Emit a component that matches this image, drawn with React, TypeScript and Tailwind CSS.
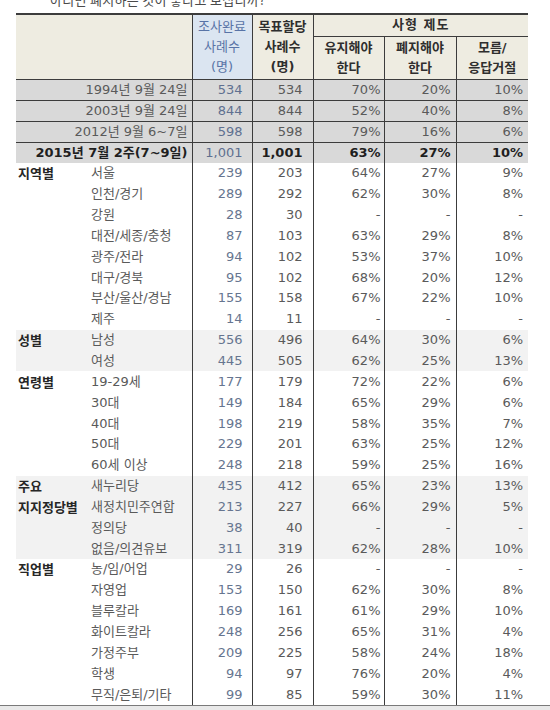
import React from "react";

type Row = [string, string, string, string, string, string];

const groups: { label: string[]; gray: boolean; rows: Row[] }[] = [
  {
    label: ["지역별"],
    gray: false,
    rows: [
      ["서울", "239", "203", "64%", "27%", "9%"],
      ["인천/경기", "289", "292", "62%", "30%", "8%"],
      ["강원", "28", "30", "-", "-", "-"],
      ["대전/세종/충청", "87", "103", "63%", "29%", "8%"],
      ["광주/전라", "94", "102", "53%", "37%", "10%"],
      ["대구/경북", "95", "102", "68%", "20%", "12%"],
      ["부산/울산/경남", "155", "158", "67%", "22%", "10%"],
      ["제주", "14", "11", "-", "-", "-"],
    ],
  },
  {
    label: ["성별"],
    gray: true,
    rows: [
      ["남성", "556", "496", "64%", "30%", "6%"],
      ["여성", "445", "505", "62%", "25%", "13%"],
    ],
  },
  {
    label: ["연령별"],
    gray: false,
    rows: [
      ["19-29세", "177", "179", "72%", "22%", "6%"],
      ["30대", "149", "184", "65%", "29%", "6%"],
      ["40대", "198", "219", "58%", "35%", "7%"],
      ["50대", "229", "201", "63%", "25%", "12%"],
      ["60세 이상", "248", "218", "59%", "25%", "16%"],
    ],
  },
  {
    label: ["주요", "지지정당별"],
    gray: true,
    rows: [
      ["새누리당", "435", "412", "65%", "23%", "13%"],
      ["새정치민주연합", "213", "227", "66%", "29%", "5%"],
      ["정의당", "38", "40", "-", "-", "-"],
      ["없음/의견유보", "311", "319", "62%", "28%", "10%"],
    ],
  },
  {
    label: ["직업별"],
    gray: false,
    rows: [
      ["농/임/어업", "29", "26", "-", "-", "-"],
      ["자영업", "153", "150", "62%", "30%", "8%"],
      ["블루칼라", "169", "161", "61%", "29%", "10%"],
      ["화이트칼라", "248", "256", "65%", "31%", "4%"],
      ["가정주부", "209", "225", "58%", "24%", "18%"],
      ["학생", "94", "97", "76%", "20%", "4%"],
      ["무직/은퇴/기타", "99", "85", "59%", "30%", "11%"],
    ],
  },
];

const years: { label: string; v: string[]; bold: boolean }[] = [
  { label: "1994년 9월 24일", v: ["534", "534", "70%", "20%", "10%"], bold: false },
  { label: "2003년 9월 24일", v: ["844", "844", "52%", "40%", "8%"], bold: false },
  { label: "2012년 9월 6~7일", v: ["598", "598", "79%", "16%", "6%"], bold: false },
  { label: "2015년 7월 2주(7~9일)", v: ["1,001", "1,001", "63%", "27%", "10%"], bold: true },
];

const vline = "border-r border-r-[#3c3c3c]";

export default function App() {
  return (
    <div className="w-[550px] h-[710px] overflow-hidden bg-white font-['DejaVu_Sans','Noto_Sans_CJK_KR',sans-serif] text-[13px] text-[#5a5a5a]">
      <div className="h-[13px] overflow-hidden pl-[50px]">
        <div className="-mt-[8px] leading-[16px] text-[13px] text-[#4a4a4a] font-['Noto_Sans_CJK_KR',sans-serif] tracking-[0.3px]">
          아니면 폐지하는 것이 좋다고 보십니까?
        </div>
      </div>
      <table className="ml-[16px] w-[512px] table-fixed border-collapse">
        <colgroup>
          <col className="w-[74px]" />
          <col className="w-[102px]" />
          <col className="w-[60px]" />
          <col className="w-[61px]" />
          <col className="w-[71px]" />
          <col className="w-[72px]" />
          <col className="w-[72px]" />
        </colgroup>
        <thead>
          <tr className="h-[22px]">
            <th
              colSpan={2}
              rowSpan={2}
              className={`bg-[#eeece1] border-t-2 border-t-[#3c3c3c] border-b border-b-[#3c3c3c] ${vline} p-0`}
            ></th>
            <th
              rowSpan={2}
              className={`bg-[#dbe5f1] border-t-2 border-t-[#3c3c3c] border-b border-b-[#3c3c3c] ${vline} p-0 pt-[2px] align-top font-normal text-[#5873a6] leading-[20px]`}
            >
              조사완료
              <br />
              사례수
              <br />
              (명)
            </th>
            <th
              rowSpan={2}
              className={`bg-[#eeece1] border-t-2 border-t-[#3c3c3c] border-b border-b-[#3c3c3c] ${vline} p-0 pt-[2px] align-top font-bold text-[#2e2e2e] leading-[20px]`}
            >
              목표할당
              <br />
              사례수
              <br />
              (명)
            </th>
            <th
              colSpan={3}
              className="bg-[#eeece1] border-t-2 border-t-[#3c3c3c] border-b border-b-[#3c3c3c] p-0 font-bold text-[#2e2e2e] leading-[20px] tracking-[1px]"
            >
              사형 제도
            </th>
          </tr>
          <tr className="h-[43px]">
            <th className={`bg-[#eeece1] border-b border-b-[#3c3c3c] ${vline} p-0 font-bold text-[#2e2e2e] leading-[20px]`}>
              유지해야
              <br />
              한다
            </th>
            <th className={`bg-[#eeece1] border-b border-b-[#3c3c3c] ${vline} p-0 font-bold text-[#2e2e2e] leading-[20px]`}>
              폐지해야
              <br />
              한다
            </th>
            <th className="bg-[#eeece1] border-b border-b-[#3c3c3c] p-0 font-bold text-[#2e2e2e] leading-[20px]">
              모름/
              <br />
              응답거절
            </th>
          </tr>
        </thead>
        <tbody>
          {years.map((y, i) => {
            const last = i === years.length - 1;
            const bb = last ? "" : "border-b border-b-[#3c3c3c]";
            const w = y.bold ? "font-bold text-[#1f1f1f]" : "";
            return (
              <tr key={y.label} className="h-[21px] bg-[#d9d9d9] leading-[20px]">
                <td colSpan={2} className={`p-0 pr-[4px] text-right ${bb} ${vline} ${w}`}>
                  {y.label}
                </td>
                <td className={`p-0 pr-[9px] text-right text-[#5f7090] ${bb} ${vline}`}>{y.v[0]}</td>
                <td className={`p-0 pr-[10px] text-right ${bb} ${vline} ${w}`}>{y.v[1]}</td>
                <td className={`p-0 pr-[3px] text-right ${bb} ${vline} ${w}`}>{y.v[2]}</td>
                <td className={`p-0 pr-[5px] text-right ${bb} ${vline} ${w}`}>{y.v[3]}</td>
                <td className={`p-0 pr-[5px] text-right ${bb} ${w}`}>{y.v[4]}</td>
              </tr>
            );
          })}
          {groups.map((g) =>
            g.rows.map((r, i) => (
              <tr
                key={g.label.join("") + r[0]}
                className={`h-[20.85px] leading-[20px] ${g.gray ? "bg-[#f2f2f2]" : "bg-white"}`}
              >
                <td className="p-0 pl-[2px] font-bold text-[#262626] font-['Noto_Sans_CJK_KR',sans-serif] whitespace-nowrap">
                  {g.label[i] ?? ""}
                </td>
                <td className={`p-0 pl-[1px] whitespace-nowrap ${vline}`}>{r[0]}</td>
                <td className={`p-0 pr-[9px] text-right text-[#66758f] ${vline}`}>{r[1]}</td>
                <td className={`p-0 pr-[10px] text-right ${vline}`}>{r[2]}</td>
                <td className={`p-0 pr-[3px] text-right ${vline}`}>{r[3]}</td>
                <td className={`p-0 pr-[5px] text-right ${vline}`}>{r[4]}</td>
                <td className="p-0 pr-[5px] text-right">{r[5]}</td>
              </tr>
            ))
          )}
        </tbody>
      </table>
      <div className="h-[20px] border-t border-t-[#7a7a7a] bg-[#e9e9e9]"></div>
    </div>
  );
}
